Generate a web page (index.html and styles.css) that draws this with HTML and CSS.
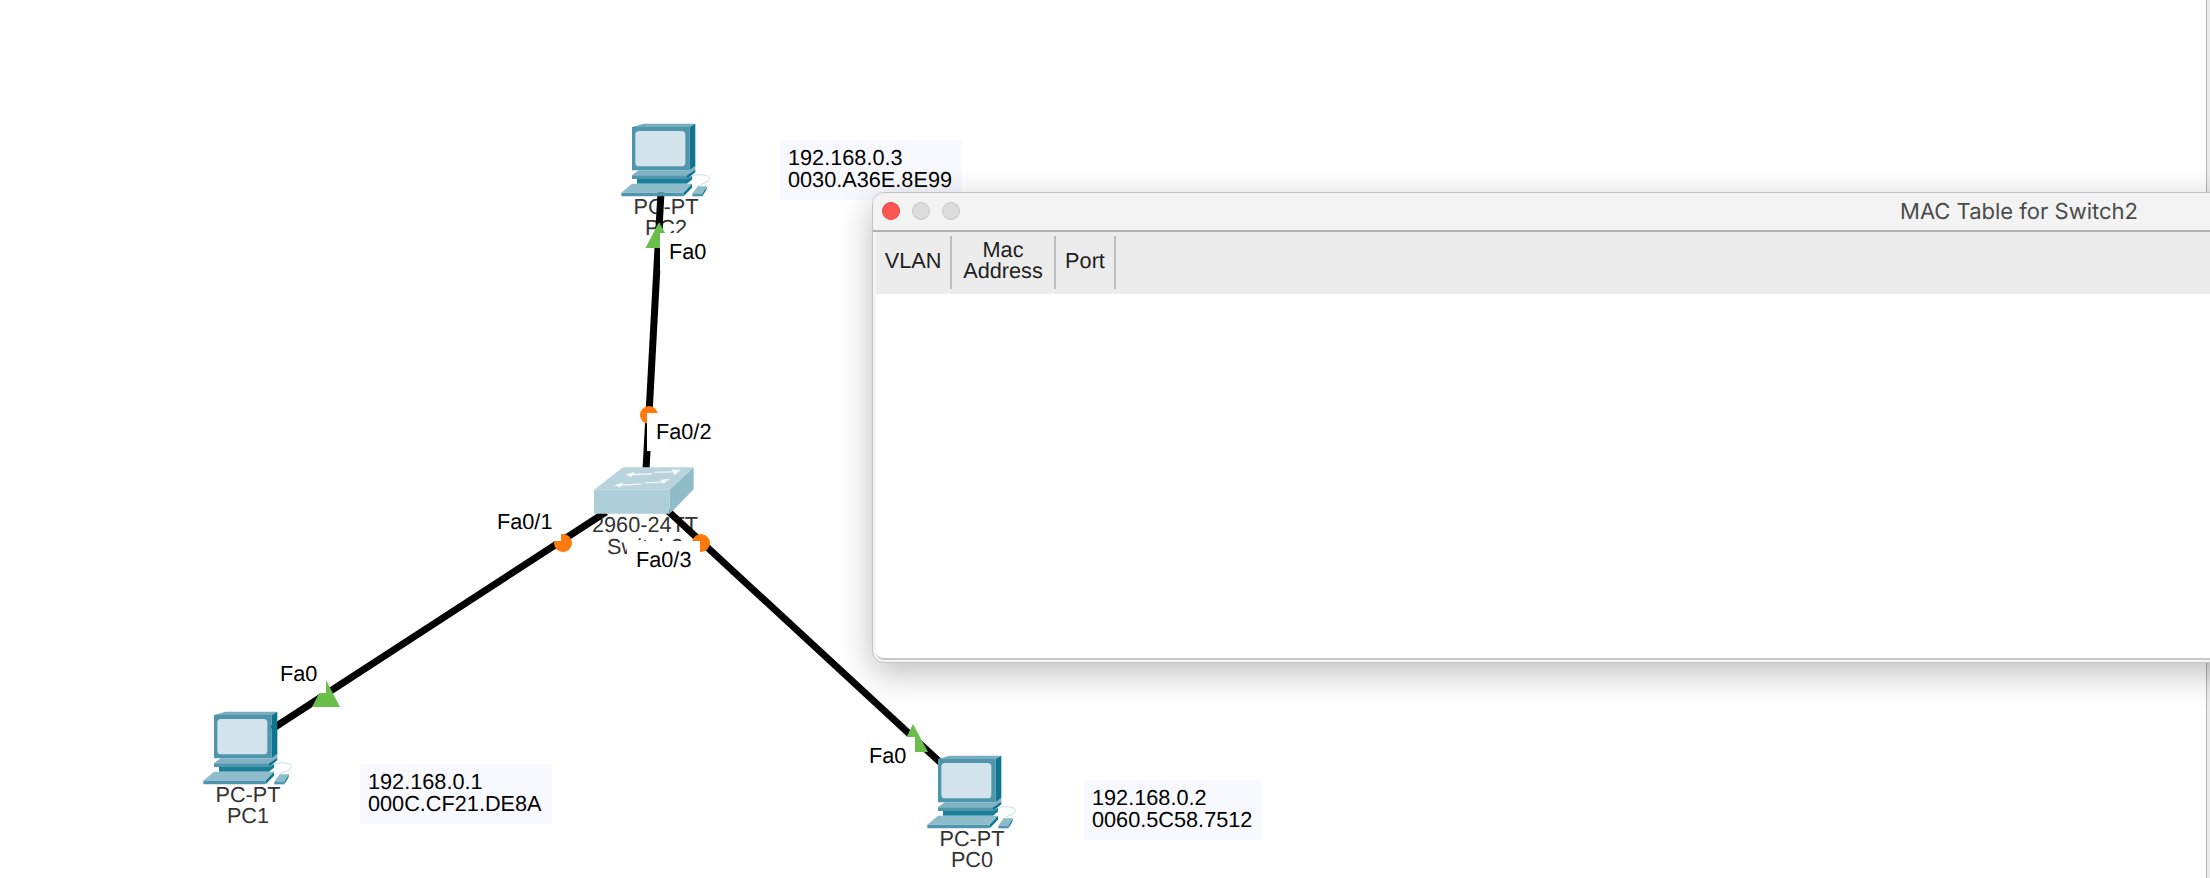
FILE: index.html
```html
<!DOCTYPE html>
<html lang="en">
<head>
<meta charset="utf-8">
<title>MAC Table for Switch2</title>
<link rel="stylesheet" href="styles.css">
</head>
<body>
<main class="canvas">
  <svg class="defs" width="0" height="0" aria-hidden="true">
    <symbol id="pc" viewBox="122 68 270 225">
      <path d="M335 228C350 220 388 222 387 235C386 246 365 250 352 258" fill="none" stroke="#b4d6e2" stroke-width="2.5"/>
      <polygon points="155,80 190,70 345,70 328,80" fill="#77adbf"/>
      <polygon points="155,80 328,80 328,210 155,210" fill="#4f96ad"/>
      <polygon points="328,80 345,70 345,198 328,210" fill="#0f7690"/>
      <rect x="165" y="92" width="150" height="106" rx="11" fill="#d2e3eb"/>
      <polygon points="155,225 175,210 328,210 345,196 345,208 320,225" fill="#7fb2c4"/>
      <polygon points="155,225 320,225 320,236 155,236" fill="#4f96ad"/>
      <polygon points="320,225 345,208 345,216 320,236" fill="#0f7690"/>
      <polygon points="170,236 320,236 335,226 335,238 320,250 170,250" fill="#1a7f9b"/>
      <polygon points="155,250 335,250 310,277 123,277" fill="#8fbccb"/>
      <polygon points="123,277 310,277 310,288 123,288" fill="#4f96ad"/>
      <polygon points="310,277 335,250 335,262 310,288" fill="#0f7690"/>
      <polygon points="336,280 352,258 380,258 366,280" fill="#8fbccb"/>
      <polygon points="336,280 366,280 366,288 336,288" fill="#4f96ad"/>
      <polygon points="366,280 380,258 378,268 366,288" fill="#0f7690"/>
    </symbol>
  </svg>

  <div class="device-label label-pc2">PC-PT<br>PC2</div>
  <div class="device-label label-pc1">PC-PT<br>PC1</div>
  <div class="device-label label-pc0">PC-PT<br>PC0</div>
  <div class="device-label label-switch">2960-24TT<br>Switch2</div>

  <svg class="links" width="2210" height="878" aria-hidden="true">
    <g class="link">
      <line x1="661" y1="192" x2="646" y2="470"/>
      <line x1="272" y1="729" x2="606" y2="512"/>
      <line x1="668" y1="511" x2="942" y2="764"/>
    </g>
  </svg>

  <svg class="device-icon icon-pc2" width="90" height="75"><use href="#pc"/></svg>
  <svg class="device-icon icon-pc1" width="90" height="75"><use href="#pc"/></svg>
  <svg class="device-icon icon-pc0" width="90" height="75"><use href="#pc"/></svg>

  <svg class="device-icon icon-switch" width="100" height="47" viewBox="163 262 300 140">
    <polygon points="163,330 250,262 462,262 390,330" fill="#b9d4dd"/>
    <polygon points="163,330 390,330 390,402 163,402" fill="#aecfda"/>
    <polygon points="390,330 462,262 462,328 390,402" fill="#8fbcc9"/>
    <g fill="#f4f9fb">
      <polygon points="258,284 285,276 282,282 338,280 336,284 278,286 274,292"/>
      <polygon points="345,276 398,274 396,269 424,270 404,286 400,278 345,279"/>
      <polygon points="224,316 250,307 247,313 306,311 302,315 244,318 240,323"/>
      <polygon points="318,308 365,305 363,300 390,297 372,312 366,308 316,311"/>
    </g>
  </svg>

  <svg class="links" width="2210" height="878" aria-hidden="true">
    <g class="link-up">
      <polygon points="645.5,248 673,248 659,222"/>
      <polygon points="312,707 340,707 326,680"/>
      <polygon points="899,752 928,752 913,724"/>
    </g>
    <g class="link-port">
      <circle cx="649" cy="415" r="9"/>
      <circle cx="563" cy="543" r="9"/>
      <circle cx="701" cy="543" r="9"/>
    </g>
  </svg>

  <div class="port-label port-pc2">Fa0</div>
  <div class="port-label port-sw2">Fa0/2</div>
  <div class="port-label port-sw1">Fa0/1</div>
  <div class="port-label port-sw3">Fa0/3</div>
  <div class="port-label port-pc1">Fa0</div>
  <div class="port-label port-pc0">Fa0</div>

  <div class="info info-pc2">192.168.0.3<br>0030.A36E.8E99</div>
  <div class="info info-pc1">192.168.0.1<br>000C.CF21.DE8A</div>
  <div class="info info-pc0">192.168.0.2<br>0060.5C58.7512</div>

  <div class="edge-strip"></div>

  <section class="window">
    <header class="titlebar">
      <div class="lights">
        <span class="light light-close"></span>
        <span class="light"></span>
        <span class="light"></span>
      </div>
      <h1 class="title">MAC Table for Switch2</h1>
    </header>
    <div class="table-head">
      <div class="col col-vlan">VLAN</div>
      <div class="col col-mac">Mac<br>Address</div>
      <div class="col col-port">Port</div>
    </div>
    <div class="table-body"></div>
  </section>
</main>
</body>
</html>
```
FILE: styles.css
```css
* { box-sizing: border-box; }

html, body {
  margin: 0;
  padding: 0;
  background: #fff;
  overflow: hidden;
}

.canvas {
  position: relative;
  width: 2210px;
  height: 878px;
  overflow: hidden;
  font-family: "Liberation Sans", Arial, sans-serif;
  font-size: 21.7px;
  text-rendering: geometricPrecision;
}

.defs { position: absolute; }

.links {
  position: absolute;
  left: 0;
  top: 0;
}
.link line { stroke: #000; stroke-width: 7; }
.link-up polygon { fill: #6abf4b; }
.link-port circle { fill: #ff7a0d; }

.device-icon { position: absolute; }
.icon-pc2 { left: 621px; top: 123px; }
.icon-pc1 { left: 203px; top: 711px; }
.icon-pc0 { left: 927px; top: 755px; }
.icon-switch { left: 594px; top: 467px; }

.device-label {
  position: absolute;
  width: 140px;
  text-align: center;
  line-height: 21px;
  color: #333;
  white-space: nowrap;
}
.label-pc2 { left: 596px; top: 196px; }
.label-pc1 { left: 178px; top: 784px; }
.label-pc0 { left: 902px; top: 828px; }
.label-switch { left: 575px; top: 514px; line-height: 22px; }

.port-label {
  position: absolute;
  height: 38px;
  padding: 0 9px;
  line-height: 38px;
  background: #fff;
  color: #000;
  white-space: nowrap;
}
.port-pc2 { left: 660px; top: 233px; }
.port-sw2 { left: 647px; top: 413px; }
.port-sw1 { left: 488px; top: 503px; }
.port-sw3 { left: 627px; top: 541px; }
.port-pc1 { left: 271px; top: 655px; }
.port-pc0 { left: 860px; top: 737px; }

.info {
  position: absolute;
  padding: 7px 10px 9px 8px;
  line-height: 22px;
  background: #f8f9ff;
  color: #000;
  white-space: nowrap;
}
.info-pc2 { left: 780px; top: 140px; }
.info-pc1 { left: 360px; top: 764px; }
.info-pc0 { left: 1084px; top: 780px; }

.edge-strip {
  position: absolute;
  top: 0;
  right: 0;
  width: 4px;
  height: 878px;
  background: #ececec;
  border-left: 1.5px solid #b4b4b4;
}

.window {
  position: absolute;
  left: 872px;
  top: 192px;
  width: 2294px;
  height: 471px;
  display: flex;
  flex-direction: column;
  padding: 0 3px 3px;
  background: #f4f4f4;
  border: 1px solid #c4c4c4;
  border-radius: 12px;
  box-shadow: 0 10px 34px rgba(0, 0, 0, .26);
}

.titlebar {
  position: relative;
  flex: none;
  height: 39px;
  margin: 0 -3px;
  display: flex;
  align-items: center;
  justify-content: center;
  border-bottom: 2px solid #b0b0b0;
  border-radius: 11px 11px 0 0;
  background: #f3f3f3;
}
.lights {
  position: absolute;
  left: 9px;
  top: 9px;
  display: flex;
  gap: 12px;
}
.light {
  width: 18px;
  height: 18px;
  border-radius: 50%;
  background: #dcdcdc;
  border: 1px solid #c8c8c8;
}
.light-close {
  background: #fd5653;
  border-color: #e9463f;
}
.title {
  margin: 0;
  font-family: Inter, "Liberation Sans", sans-serif;
  font-size: 22px;
  font-weight: 400;
  color: #4b4b4b;
  white-space: nowrap;
}

.table-head {
  flex: none;
  height: 62px;
  display: flex;
  padding: 4px 0 5px;
  background: #ececec;
  color: #222;
  line-height: 21px;
  text-align: center;
}
.col {
  display: flex;
  align-items: center;
  justify-content: center;
  padding-bottom: 5px;
  border-right: 2px solid #bdbdbd;
}
.col-vlan { width: 76px; }
.col-mac { width: 104px; }
.col-port { width: 60px; }

.table-body {
  flex: 1;
  background: #fff;
  border-bottom: 2px solid #c8c8c8;
  margin-bottom: -1px;
  border-radius: 0 0 8px 8px;
}
```
